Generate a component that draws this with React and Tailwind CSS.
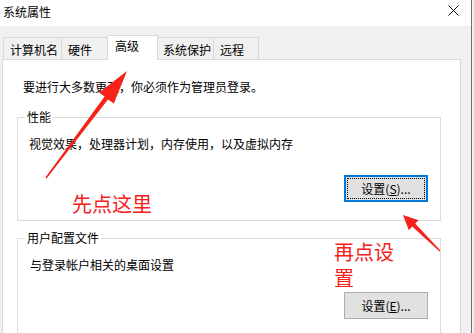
import React from 'react';

const FONT = { fontFamily: '"Noto Sans CJK SC", "Noto Sans", sans-serif' };

const TABS = [
  { label: '计算机名', w: 'w-[59px]' },
  { label: '硬件', w: 'w-[47px]' },
  { label: '高级', w: 'w-[51px]', active: true },
  { label: '系统保护', w: 'w-[58px]' },
  { label: '远程', w: 'w-[46px]' },
];

function Tab({ label, w, active }) {
  if (active) {
    return (
      <div className={`${w} h-[25px] -mb-px -mx-px z-10 bg-white border border-b-0 border-[#d9d9d9] pl-[7px] pt-[2px] leading-[16px]`}>
        {label}
      </div>
    );
  }
  return (
    <div className={`${w} h-[22px] border border-[#d9d9d9] border-b-0 -ml-px first:ml-0 pl-[6px] pt-[4px] leading-[16px]`}>
      {label}
    </div>
  );
}

function GroupBox({ title, className = '', children }) {
  return (
    <div className={`relative border border-[#dcdcdc] ${className}`}>
      <span className="absolute -top-[9px] left-[7px] bg-white px-[2px] leading-[16px]">{title}</span>
      {children}
    </div>
  );
}

function Arrows() {
  return (
    <svg className="pointer-events-none absolute inset-0" width="474" height="333" viewBox="0 0 474 333">
      <polygon
        fill="#f5221b"
        points="46.6,178.5 108,99.6 113.8,103.6 127,71 99.2,92.6 104.6,96.4 45.4,177.5"
      />
      <polygon
        fill="#f5221b"
        points="440.4,250.6 415.2,223.5 418.6,220.2 403,215 408.8,230.2 412.2,226.6 439.6,251.4"
      />
    </svg>
  );
}

export default function App() {
  return (
    <div className="relative w-[474px] h-[333px] overflow-hidden bg-[#f0f0f0] text-[12px] text-black" style={FONT}>
      {/* title bar */}
      <div className="flex h-[26px] w-[471px] items-center justify-between bg-white pl-[3px] pr-[12px]">
        <span className="leading-[16px] -mt-[2px]">系统属性</span>
        <svg width="11" height="11" viewBox="0 0 11 11" className="-mt-[6px]">
          <path d="M0.5 0.5 L10.5 10.5 M10.5 0.5 L0.5 10.5" stroke="#111" strokeWidth="1" />
        </svg>
      </div>

      <div className="flex">
        <div className="w-[471px]">
          {/* tabs */}
          <div className="flex items-end pl-[3px] pt-[9px]">
            {TABS.map((t) => (
              <Tab key={t.label} {...t} />
            ))}
          </div>

          {/* page */}
          <div className="ml-[2px] w-[459px] h-[280px] bg-white border border-[#d9d9d9] pl-[14px] pr-[19px]">
            <p className="pl-[6px] pt-[19px] leading-[16px]">要进行大多数更改，你必须作为管理员登录。</p>

            <GroupBox title="性能" className="mt-[22px] h-[104px]">
              <p className="pl-[11px] pt-[18px] leading-[16px]">视觉效果，处理器计划，内存使用，以及虚拟内存</p>
              <div className="flex justify-end pr-[12px] pt-[23px]">
                <button className="relative h-[27px] w-[84px] border-2 border-[#0078d7] bg-[#e1e1e1] leading-[16px]">
                  <span className="absolute inset-[1px] border border-dotted border-black" />
                  设置(<span className="underline">S</span>)...
                </button>
              </div>
            </GroupBox>

            <GroupBox title="用户配置文件" className="mt-[17px] h-[120px]">
              <p className="pl-[12px] pt-[18px] leading-[16px]">与登录帐户相关的桌面设置</p>
              <div className="flex justify-end pr-[12px] pt-[19px]">
                <button className="h-[27px] w-[84px] border border-[#adadad] bg-[#e1e1e1] leading-[16px]">
                  设置(<span className="underline">E</span>)...
                </button>
              </div>
            </GroupBox>
          </div>
        </div>
        <div className="w-px -mt-[26px] h-[360px] bg-[#6e6e6e]" />
      </div>

      {/* annotations */}
      <div className="absolute left-[72px] top-[191px] text-[20px] leading-[26px] text-[#f5221b]">先点这里</div>
      <div className="absolute left-[334px] top-[239px] w-[70px] text-[20px] leading-[26px] text-[#f5221b]">再点设置</div>
      <Arrows />
    </div>
  );
}
